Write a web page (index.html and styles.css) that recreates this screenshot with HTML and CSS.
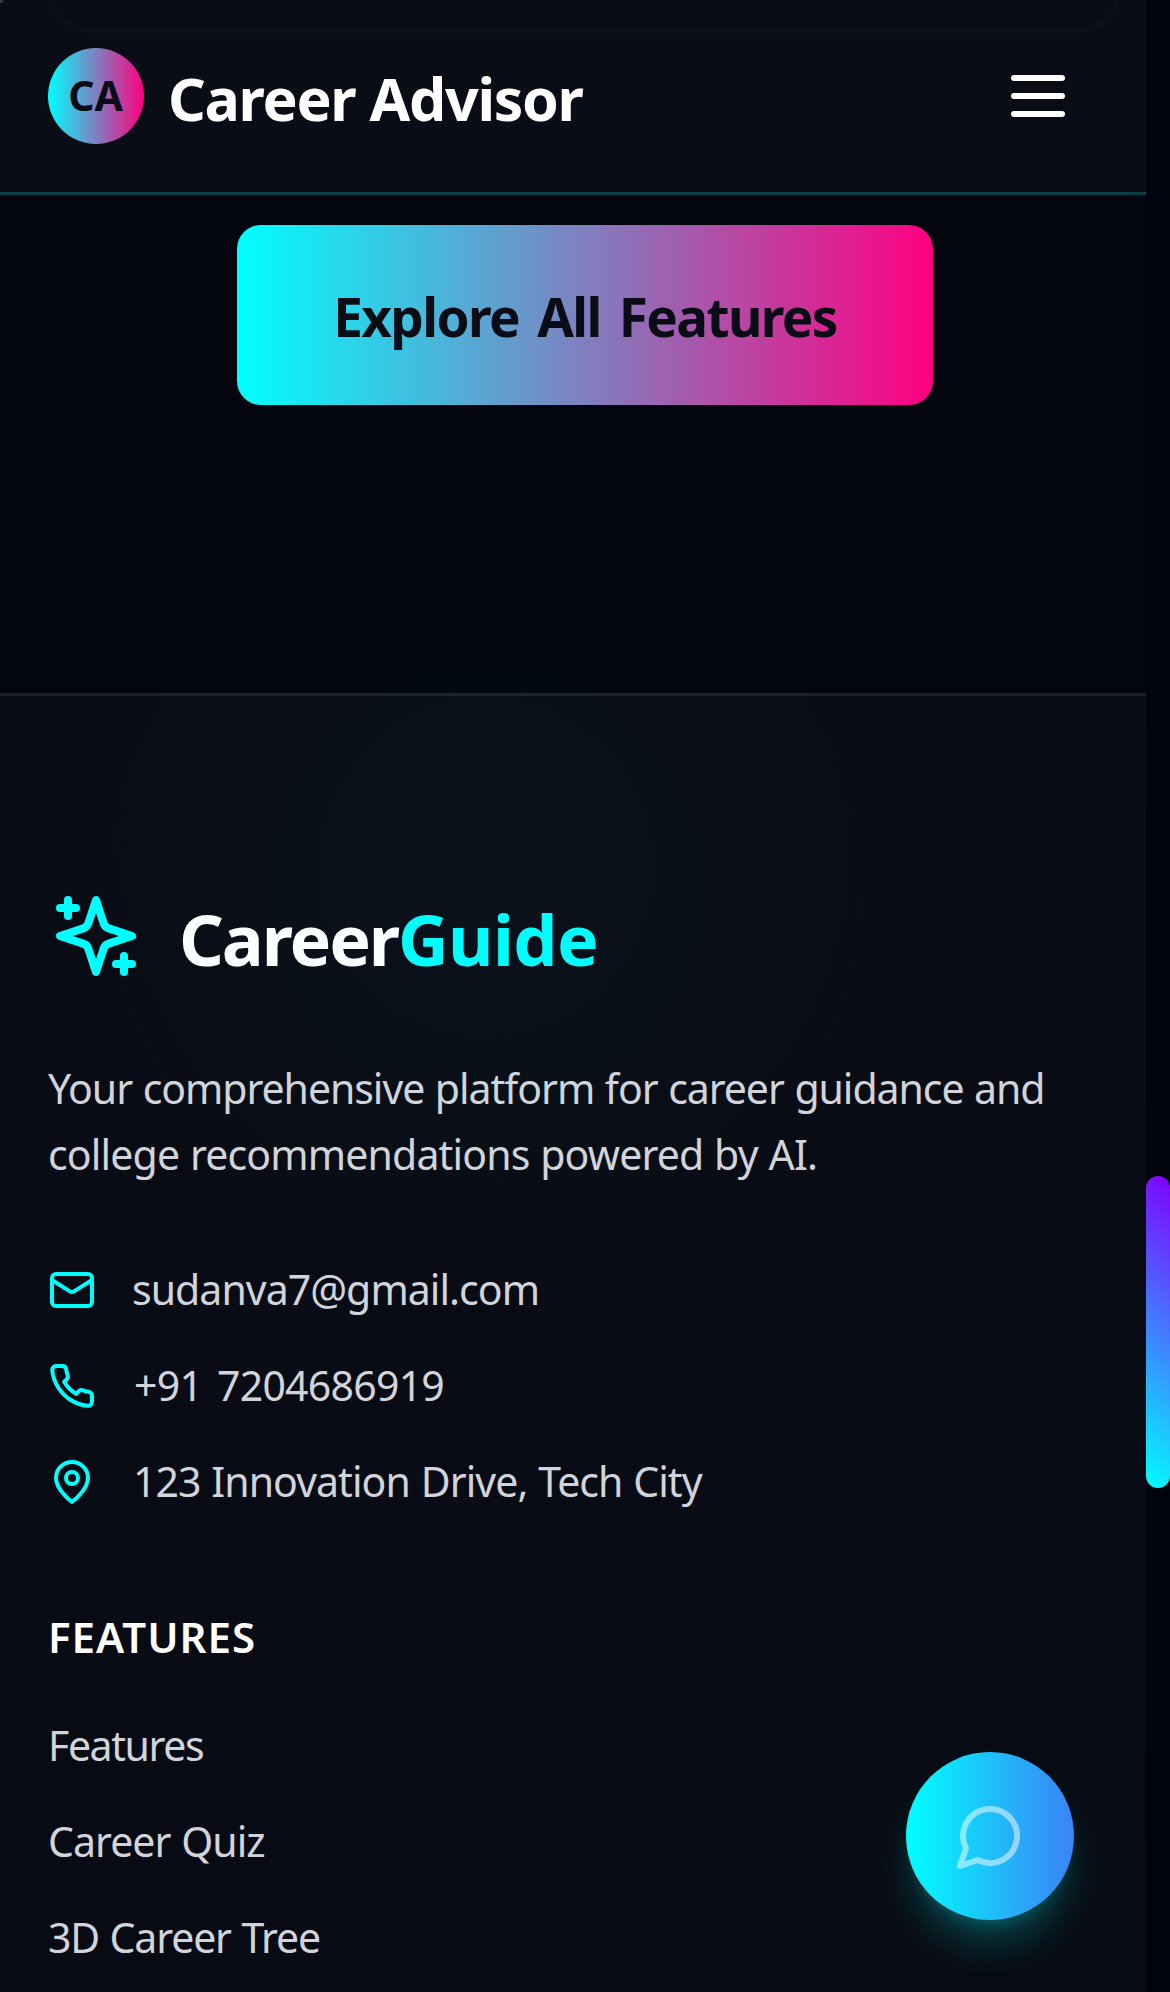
FILE: index.html
```
<!DOCTYPE html>
<html lang="en">
<head>
<meta charset="utf-8">
<title>Career Advisor</title>
<link rel="stylesheet" href="styles.css">
</head>
<body>
<div class="viewport">
  <div class="page">
    <header class="header">
      <div class="card-edge"></div>
      <a class="brand">
        <span class="brand-mark">CA</span>
        <span class="brand-name">Career Advisor</span>
      </a>
      <button class="menu" aria-label="Menu"><span></span><span></span><span></span></button>
    </header>

    <main class="hero">
      <a class="cta">Explore All Features</a>
    </main>

    <footer class="footer">
      <div class="logo">
        <svg class="logo-icon" viewBox="0 0 24 24"><path d="m12 3-1.912 5.813a2 2 0 0 1-1.275 1.275L3 12l5.813 1.912a2 2 0 0 1 1.275 1.275L12 21l1.912-5.813a2 2 0 0 1 1.275-1.275L21 12l-5.813-1.912a2 2 0 0 1-1.275-1.275L12 3Z"/><path d="M5 3v4M19 17v4M3 5h4M17 19h4"/></svg>
        <span class="logo-text"><span class="logo-first">Career</span><span class="logo-second">Guide</span></span>
      </div>
      <p class="about"><span class="about-wide">Your comprehensive platform for career guidance and</span><br>college recommendations powered by AI.</p>
      <ul class="contacts">
        <li>
          <svg viewBox="0 0 24 24"><rect width="20" height="16" x="2" y="4" rx="2"/><path d="m22 7-8.97 5.7a1.94 1.94 0 0 1-2.06 0L2 7"/></svg>
          <span class="email">sudanva7@gmail.com</span>
        </li>
        <li>
          <svg viewBox="0 0 24 24"><path d="M22 16.92v3a2 2 0 0 1-2.18 2 19.79 19.79 0 0 1-8.63-3.07 19.5 19.5 0 0 1-6-6 19.79 19.79 0 0 1-3.07-8.67A2 2 0 0 1 4.11 2h3a2 2 0 0 1 2 1.72 12.84 12.84 0 0 0 .7 2.81 2 2 0 0 1-.45 2.11L8.09 9.91a16 16 0 0 0 6 6l1.27-1.27a2 2 0 0 1 2.11-.45 12.84 12.84 0 0 0 2.81.7A2 2 0 0 1 22 16.92z"/></svg>
          <span class="phone">+91 7204686919</span>
        </li>
        <li>
          <svg viewBox="0 0 24 24"><path d="M20 10c0 6-8 12-8 12s-8-6-8-12a8 8 0 0 1 16 0Z"/><circle cx="12" cy="10" r="3"/></svg>
          <span class="address">123 Innovation Drive, Tech City</span>
        </li>
      </ul>
      <h3 class="links-title">FEATURES</h3>
      <ul class="links">
        <li class="features">Features</li>
        <li class="quiz">Career Quiz</li>
        <li>3D Career Tree</li>
      </ul>
    </footer>
  </div>
  <div class="scrollbar"><div class="thumb"></div></div>
  <div class="corner-dot"></div>
  <button class="chat" aria-label="Chat">
    <svg viewBox="0 0 24 24"><path d="M7.9 20A9 9 0 1 0 4 16.1L2 22Z"/></svg>
  </button>
</div>
</body>
</html>
```
FILE: styles.css
```
* { box-sizing: border-box; margin: 0; padding: 0; }
body {
  background: #03060f;
  color: #fff;
  font-family: "Noto Sans", "Open Sans", sans-serif;
  overflow: hidden;
}
ul { list-style: none; }
button { border: 0; background: none; }
svg { fill: none; stroke: #00ffff; stroke-width: 2; stroke-linecap: round; stroke-linejoin: round; }

.viewport { position: relative; display: flex; width: 1170px; height: 1992px; overflow: hidden; }
.page { position: relative; width: 1146px; display: flex; flex-direction: column; }
.page::after {
  content: "";
  position: absolute;
  inset: 195px 0 0;
  background: radial-gradient(circle 400px at 486px 694px, rgba(0, 210, 255, .026), rgba(0, 210, 255, .014) 50%, transparent);
  pointer-events: none;
}

.header {
  position: relative;
  display: flex;
  justify-content: space-between;
  align-items: flex-start;
  height: 195px;
  padding: 48px 81px 0 48px;
  background: #0a0d15;
  border-bottom: 3px solid #0a4044;
}
.card-edge {
  position: absolute;
  left: 48px;
  top: -120px;
  width: 1074px;
  height: 153px;
  border: 3px solid #0e1118;
  border-radius: 48px;
}
.brand { display: flex; align-items: flex-start; gap: 24px; position: relative; }
.brand-mark {
  width: 96px;
  height: 96px;
  border-radius: 50%;
  background: linear-gradient(90deg, #00ffff, #ff0080);
  color: #0a0d15;
  font-size: 41px;
  font-weight: 700;
  line-height: 95px;
  padding-right: 1px;
  text-align: center;
}
.brand-name { font-size: 59px; font-weight: 700; letter-spacing: -1.3px; line-height: 100px; }
.menu { display: flex; flex-direction: column; gap: 12px; padding-top: 27px; position: relative; }
.menu span { width: 54px; height: 6px; border-radius: 3px; background: #fff; }

.hero { height: 498px; padding: 30px 0 0 237px; }
.cta {
  display: block;
  width: 696px;
  height: 180px;
  border-radius: 24px;
  background: linear-gradient(90deg, #00ffff, #ff0080);
  color: #0a0d15;
  font-size: 53px;
  font-weight: 700;
  letter-spacing: -1.6px;
  word-spacing: 6px;
  line-height: 183px;
  text-align: center;
}

.footer {
  flex: 1;
  padding: 192px 48px 0;
  background: linear-gradient(#0a0d15, #080b13);
  border-top: 3px solid #1c2029;
}
.logo { display: flex; align-items: center; gap: 35px; height: 96px; }
.logo-icon { width: 96px; height: 96px; }
.logo-text { font-size: 70px; font-weight: 700; line-height: 96px; padding-top: 6px; }
.logo-first { letter-spacing: -2.1px; }
.logo-second { letter-spacing: -.6px; color: #00ffff; }
.about {
  margin-top: 71px;
  color: #d1d5db;
  font-size: 41px;
  letter-spacing: -.85px;
  word-spacing: 1px;
  line-height: 66px;
  white-space: nowrap;
}
.about-wide { letter-spacing: -1.05px; }
.contacts { display: flex; flex-direction: column; gap: 48px; margin-top: 79px; }
.contacts li { display: flex; align-items: center; gap: 36px; height: 48px; color: #d1d5db; font-size: 41px; line-height: 46px; }
.contacts svg { width: 48px; height: 48px; }
.contacts span { padding-bottom: 2px; }
.email { letter-spacing: -.95px; }
.phone { padding-left: 2px; letter-spacing: -.75px; word-spacing: 5px; }
.address { padding-left: 1px; letter-spacing: -.93px; word-spacing: 1px; }
.links-title { margin-top: 101px; font-size: 42px; font-weight: 600; letter-spacing: 1px; line-height: 60px; }
.links { display: flex; flex-direction: column; gap: 36px; margin-top: 48px; }
.links li { color: #d1d5db; font-size: 41px; letter-spacing: -1.15px; word-spacing: 1px; line-height: 60px; }
.links .features { letter-spacing: -1.4px; }
.links .quiz { letter-spacing: -.95px; }

.scrollbar { width: 24px; padding-top: 1176px; background: #02040d; }
.thumb { height: 312px; border-radius: 12px; background: linear-gradient(45deg, #00ffff, #8000ff); }

.corner-dot { position: absolute; left: 0; top: 0; width: 3px; height: 3px; background: #343842; }
.chat {
  position: absolute;
  left: 906px;
  top: 1752px;
  display: flex;
  align-items: center;
  justify-content: center;
  width: 168px;
  height: 168px;
  border-radius: 50%;
  background: linear-gradient(90deg, #00ffff, #3b82f6);
  box-shadow: 0 30px 45px -9px rgba(0, 255, 255, .25), 0 12px 18px -12px rgba(0, 255, 255, .25);
}
.chat svg { width: 72px; height: 72px; stroke: #fff; opacity: .5; }
```
